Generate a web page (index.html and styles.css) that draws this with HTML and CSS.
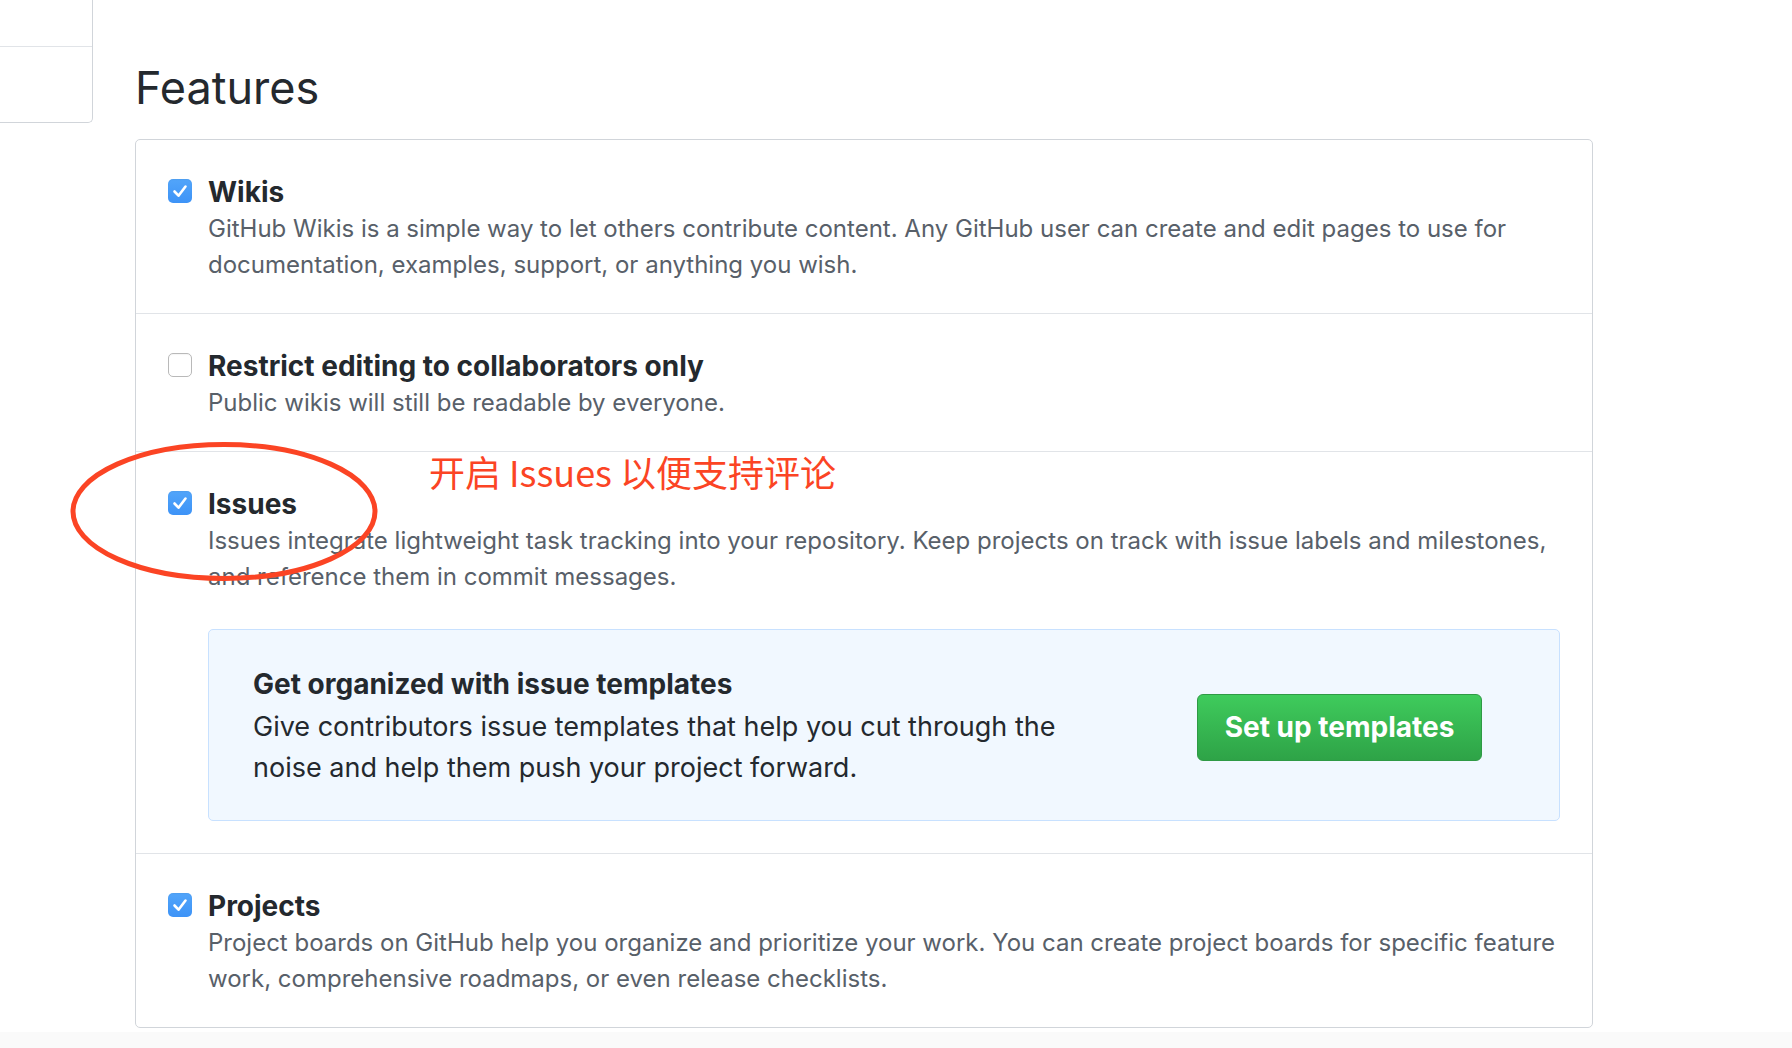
FILE: index.html
```html
<!DOCTYPE html>
<html lang="en">

<head>
  <meta charset="UTF-8">
  <meta name="viewport" content="width=device-width, initial-scale=1.0">
  <title>Features</title>
  <link rel="stylesheet" href="styles.css">
</head>

<body>
  <div class="page">
    <aside class="side-nav">
      <div class="side-item"></div>
      <div class="side-item"></div>
    </aside>

    <main class="settings">
      <h2 class="settings-title">Features</h2>

      <div class="feature-box">
        <div class="feature-row">
          <span class="check is-checked">
            <svg viewBox="0 0 24 24" width="24" height="24"><path d="M6.5 12.5l4 4.2 7-9.2" /></svg>
          </span>
          <div class="feature-body">
            <h3 class="feature-name">Wikis</h3>
            <p class="feature-note">GitHub Wikis is a simple way to let others contribute content. Any GitHub user can create and edit pages to use for documentation, examples, support, or anything you wish.</p>
          </div>
        </div>

        <div class="feature-row">
          <span class="check"></span>
          <div class="feature-body">
            <h3 class="feature-name">Restrict editing to collaborators only</h3>
            <p class="feature-note">Public wikis will still be readable by everyone.</p>
          </div>
        </div>

        <div class="feature-row feature-row-issues">
          <!-- 标注：红圈 + 文字 -->
          <svg class="mark-circle" viewBox="0 0 312 143" width="312" height="143">
            <ellipse cx="156" cy="71.5" rx="151" ry="67" />
          </svg>
          <span class="mark-text">开启 Issues 以便支持评论</span>

          <span class="check is-checked">
            <svg viewBox="0 0 24 24" width="24" height="24"><path d="M6.5 12.5l4 4.2 7-9.2" /></svg>
          </span>
          <div class="feature-body">
            <h3 class="feature-name">Issues</h3>
            <p class="feature-note">Issues integrate lightweight task tracking into your repository. Keep projects on track with issue labels and milestones, and reference them in commit messages.</p>

            <div class="template-tip">
              <div class="template-text">
                <h4 class="template-title">Get organized with issue templates</h4>
                <p class="template-desc">Give contributors issue templates that help you cut through the noise and help them push your project forward.</p>
              </div>
              <a class="btn-green" href="javascript:;">Set up templates</a>
            </div>
          </div>
        </div>

        <div class="feature-row">
          <span class="check is-checked">
            <svg viewBox="0 0 24 24" width="24" height="24"><path d="M6.5 12.5l4 4.2 7-9.2" /></svg>
          </span>
          <div class="feature-body">
            <h3 class="feature-name">Projects</h3>
            <p class="feature-note">Project boards on GitHub help you organize and prioritize your work. You can create project boards for specific feature work, comprehensive roadmaps, or even release checklists.</p>
          </div>
        </div>
      </div>
    </main>
  </div>
  <div class="page-bottom"></div>
</body>

</html>
```

FILE: styles.css
```css
body {
  margin: 0;
  background: #ffffff;
  font-family: Inter, "Noto Sans", "Noto Sans CJK SC", sans-serif;
  color: #24292e;
}

h2,
h3,
h4,
p {
  margin: 0;
  padding: 0;
}

a {
  text-decoration: none;
}

.page {
  display: grid;
  grid-template-columns: 93px 1458px;
  column-gap: 42px;
  height: 1032px;
}

/* 左侧菜单的残留部分 */
.side-nav {
  align-self: start;
  border-right: 1px solid #d1d5da;
  border-bottom: 1px solid #d1d5da;
  border-bottom-right-radius: 5px;
}

.side-item {
  height: 46px;
}

.side-item:first-child {
  border-bottom: 1px solid #e1e4e8;
}

.side-item + .side-item {
  height: 75px;
}

.settings {
  padding-top: 60px;
}

.settings-title {
  font-size: 45px;
  font-weight: 400;
  line-height: 56px;
  margin-bottom: 23px;
  color: #24292e;
}

.feature-box {
  border: 1px solid #d1d5da;
  border-radius: 5px;
}

.feature-row {
  display: flex;
  gap: 16px;
  padding: 34px 32px 30px 32px;
}

.feature-row + .feature-row {
  border-top: 1px solid #e1e4e8;
}

.feature-row-issues {
  position: relative;
  padding-bottom: 32px;
}

.check {
  flex: none;
  width: 24px;
  height: 24px;
  margin-top: 5px;
  box-sizing: border-box;
  border: 1px solid #b9b9b9;
  border-radius: 5px;
  background: #ffffff;
  box-shadow: inset 0 1px 1px rgba(0, 0, 0, .04);
}

.check.is-checked {
  border: none;
  background: linear-gradient(#52a5fa, #3d93f7);
}

.check svg {
  display: block;
}

.check svg path {
  fill: none;
  stroke: #ffffff;
  stroke-width: 2.6;
  stroke-linecap: round;
  stroke-linejoin: round;
}

.feature-body {
  flex: 1;
}

.feature-name {
  font-size: 28px;
  font-weight: 700;
  line-height: 36px;
  color: #24292e;
}

.feature-note {
  margin-top: 1px;
  font-size: 24px;
  line-height: 36px;
  color: #586069;
}

.template-tip {
  display: flex;
  align-items: center;
  margin-top: 34px;
  padding: 36px 77px 32px 44px;
  background: #f1f8ff;
  border: 1px solid #c8e1ff;
  border-radius: 5px;
}

.template-text {
  width: 860px;
}

.template-title {
  font-size: 28px;
  font-weight: 700;
  line-height: 36px;
  color: #24292e;
}

.template-desc {
  margin-top: 4px;
  font-size: 27px;
  line-height: 41px;
  color: #24292e;
}

.btn-green {
  margin-left: auto;
  display: block;
  width: 285px;
  height: 67px;
  box-sizing: border-box;
  line-height: 65px;
  text-align: center;
  font-size: 28px;
  font-weight: 700;
  color: #ffffff;
  background: linear-gradient(#3fcb5c, #2ea347);
  border: 1px solid #2f9a45;
  border-radius: 6px;
}

/* 标注 */
.mark-circle {
  position: absolute;
  left: -68px;
  top: -12px;
  overflow: visible;
}

.mark-circle ellipse {
  fill: none;
  stroke: #fb4424;
  stroke-width: 5;
}

.mark-text {
  position: absolute;
  left: 293px;
  top: 1px;
  font-family: "Noto Sans CJK SC", sans-serif;
  font-size: 36px;
  line-height: 36px;
  color: #fb4424;
}

.page-bottom {
  height: 16px;
  background: #fafafa;
}
```
